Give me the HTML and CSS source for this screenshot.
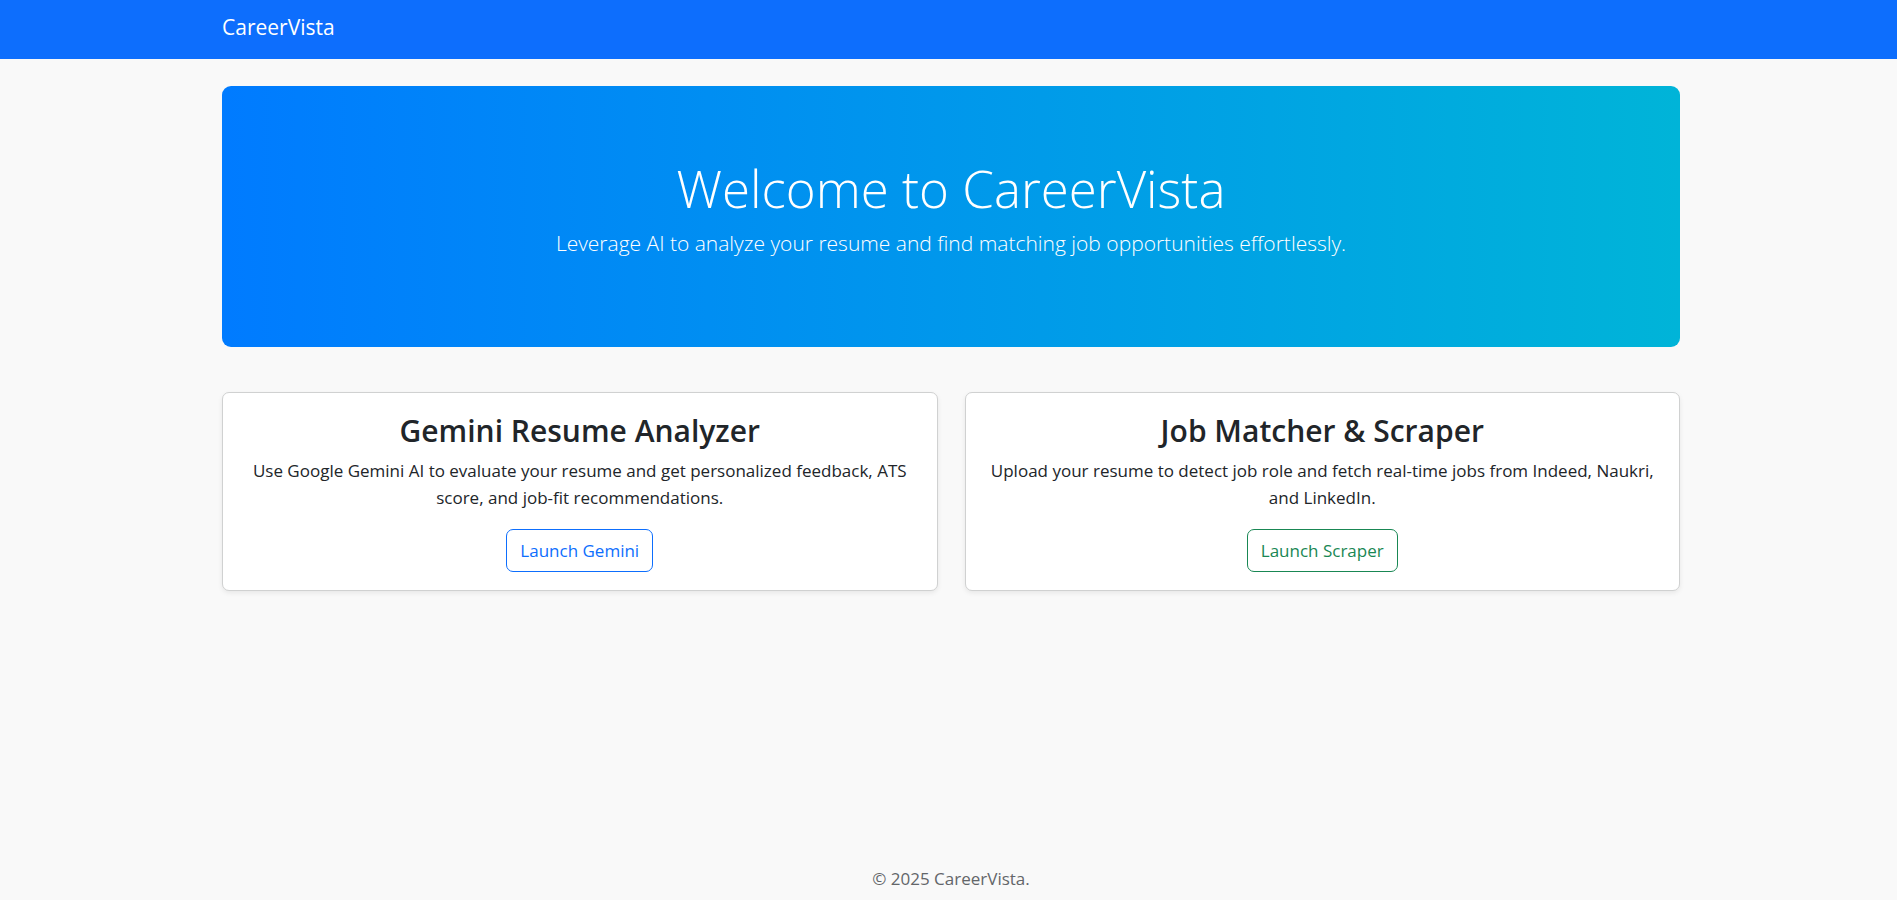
FILE: index.html
```html
<!DOCTYPE html>
<html lang="en">
<head>
<meta charset="UTF-8">
<meta name="viewport" content="width=device-width, initial-scale=1">
<title>CareerVista</title>
<link rel="stylesheet" href="styles.css">
</head>
<body>
<nav class="navbar">
  <div class="container">
    <a class="brand" href="#">CareerVista</a>
  </div>
</nav>
<main class="container main">
  <header class="hero">
    <h1 class="hero-title">Welcome to CareerVista</h1>
    <p class="lead">Leverage AI to analyze your resume and find matching job opportunities effortlessly.</p>
  </header>
  <div class="cards">
    <section class="card">
      <h2 class="card-title">Gemini Resume Analyzer</h2>
      <p class="card-text">Use Google Gemini AI to evaluate your resume and get personalized feedback, ATS score, and job-fit recommendations.</p>
      <a class="btn btn-primary" href="#">Launch Gemini</a>
    </section>
    <section class="card">
      <h2 class="card-title">Job Matcher &amp; Scraper</h2>
      <p class="card-text">Upload your resume to detect job role and fetch real-time jobs from Indeed, Naukri, and LinkedIn.</p>
      <a class="btn btn-success" href="#">Launch Scraper</a>
    </section>
  </div>
</main>
<footer class="container footer">© 2025 CareerVista.</footer>
</body>
</html>
```
FILE: styles.css
```css
* {
  box-sizing: border-box;
}

body {
  display: flex;
  flex-direction: column;
  min-height: 100vh;
  margin: 0;
  background: #f9f9f9;
  color: #212529;
  font-family: "Open Sans", sans-serif;
  font-size: 17px;
  line-height: 27px;
}

.container {
  width: 100%;
  max-width: 1491px;
  margin: 0 auto;
  padding: 0 14px 0 19px;
}

.navbar {
  background: #0d6efd;
  padding: 7px 0 11px;
}

.brand {
  display: inline-block;
  padding: 4px 0;
  color: #fff;
  font-size: 21px;
  line-height: 33px;
  text-decoration: none;
}

.main {
  padding-top: 27px;
}

.hero {
  padding: 68px 27px 69px;
  border-radius: 9px;
  background: linear-gradient(to right, #007bff, #00b4d8);
  color: #fff;
  text-align: center;
}

.hero-title {
  margin: 0 0 4px;
  font-size: 51px;
  font-weight: 300;
  line-height: 68px;
}

.lead {
  margin: 0 0 18px;
  font-size: 21px;
  font-weight: 300;
  line-height: 34px;
}

.cards {
  display: grid;
  grid-template-columns: repeat(auto-fit, minmax(400px, 1fr));
  gap: 27px;
  margin-top: 45px;
}

.card {
  padding: 18px;
  border: 1px solid #d0d1d1;
  border-radius: 7px;
  background: #fff;
  box-shadow: 0 2px 5px rgba(0, 0, 0, 0.075);
  text-align: center;
}

.card-title {
  margin: 0 0 6px;
  font-size: 30px;
  font-weight: 600;
  line-height: 40px;
}

.card-text {
  margin: 0 0 18px;
}

.btn {
  display: inline-block;
  padding: 7px 13px;
  border: 1px solid currentColor;
  border-radius: 7px;
  text-decoration: none;
  vertical-align: top;
}

.btn-primary {
  color: #0d6efd;
}

.btn-success {
  color: #198754;
}

.footer {
  margin-top: auto;
  padding-top: 18px;
  padding-bottom: 8px;
  color: #636669;
  text-align: center;
}
```
